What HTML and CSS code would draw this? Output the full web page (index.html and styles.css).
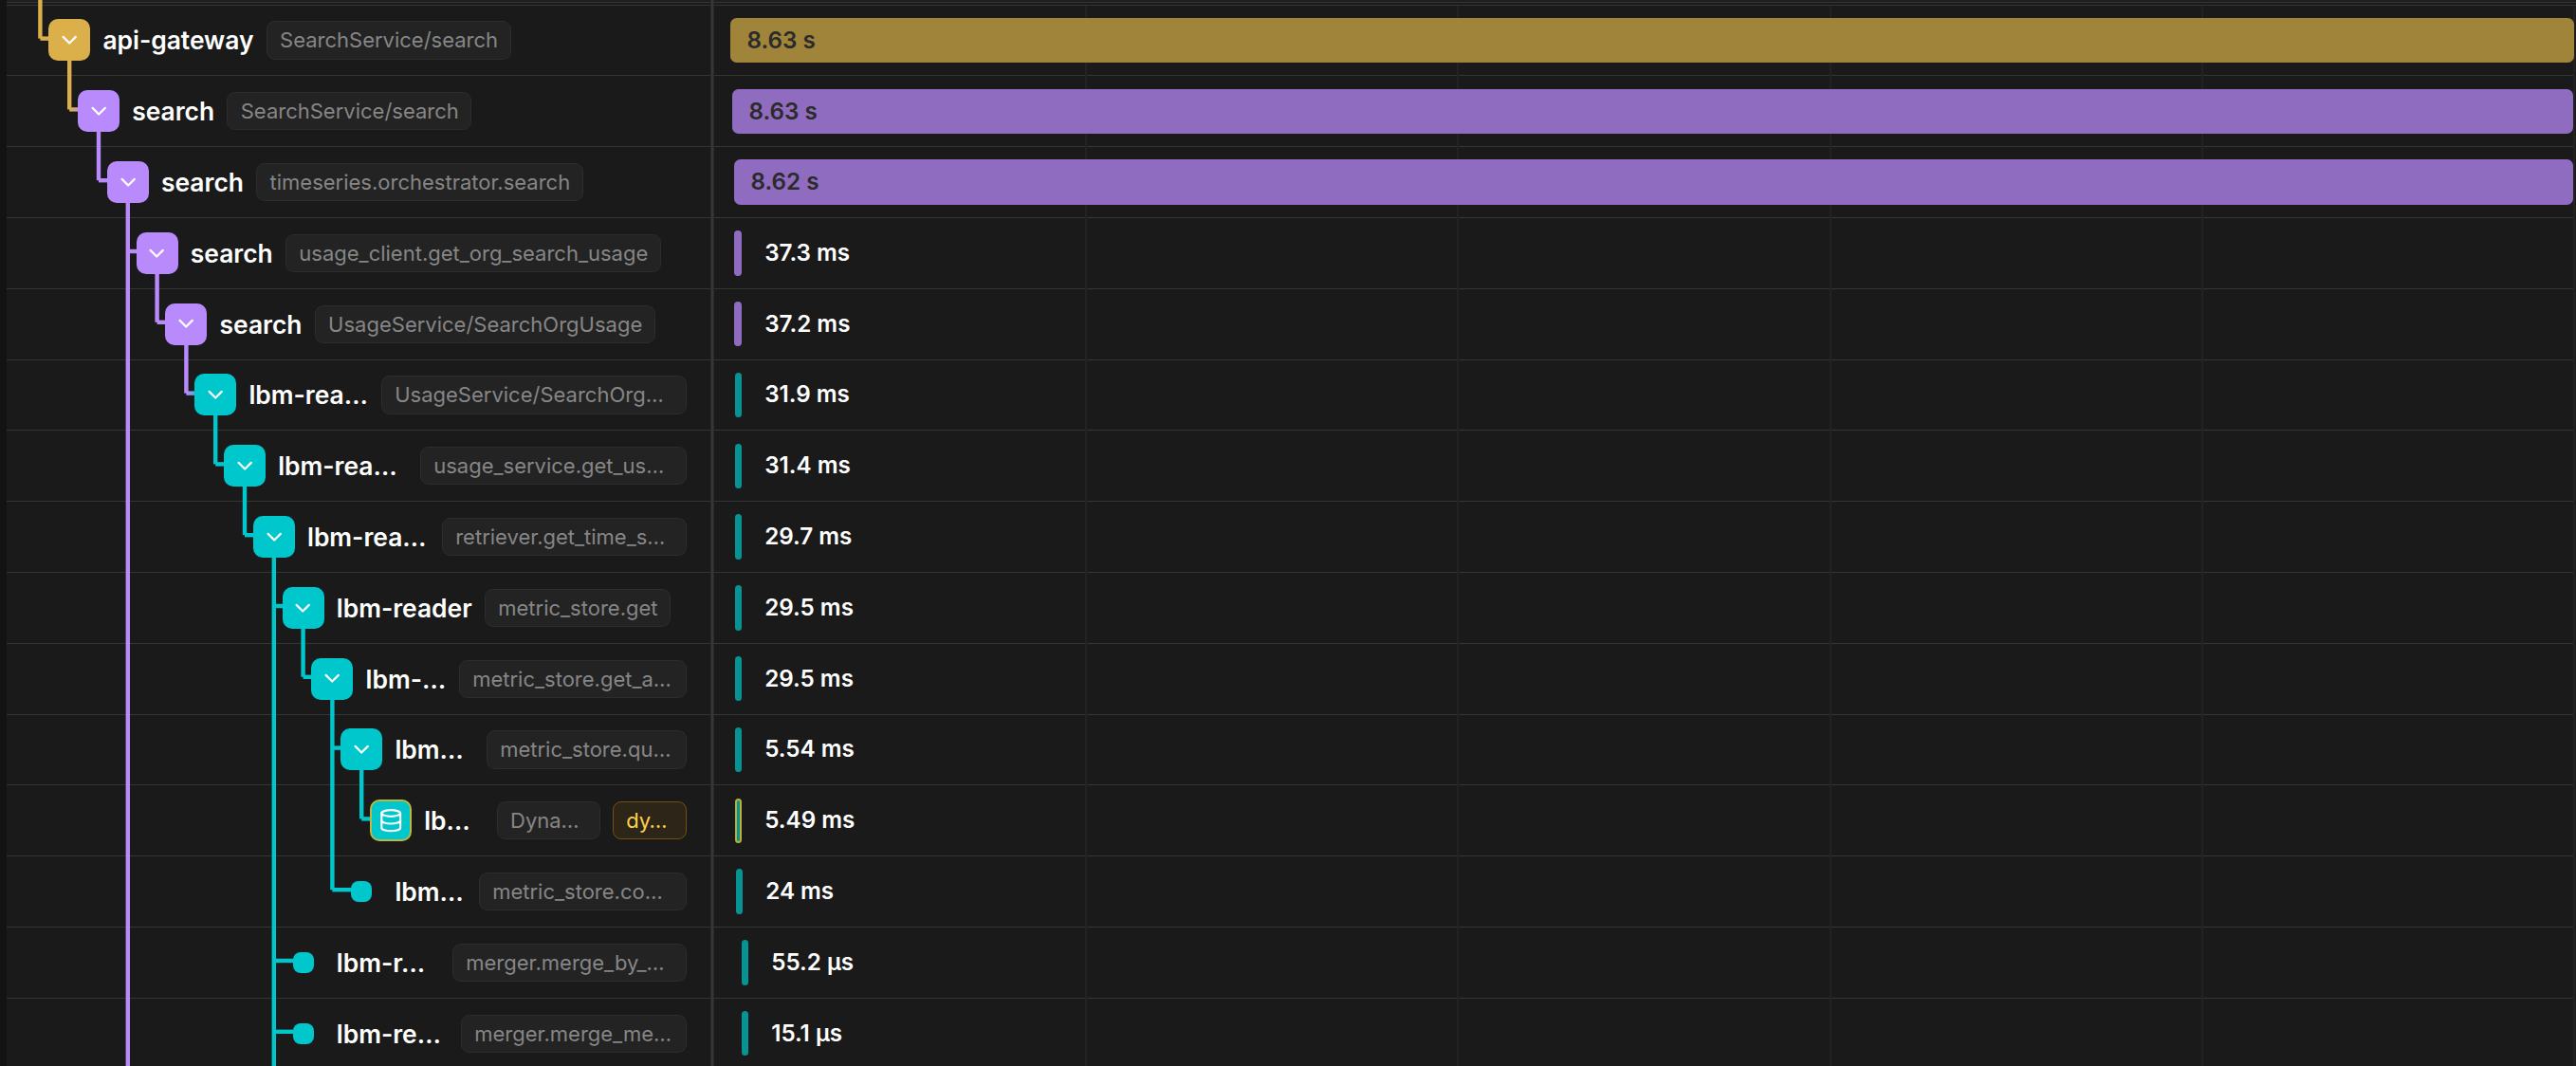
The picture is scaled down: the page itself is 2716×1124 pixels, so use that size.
FILE: index.html
```html
<!DOCTYPE html>
<html lang="en">
<head>
<meta charset="utf-8">
<title>Trace waterfall</title>
<link rel="stylesheet" href="styles.css">
</head>
<body>
<svg width="0" height="0" class="defs">
  <symbol id="chev" viewBox="0 0 24 24"><path d="m6 9 6 6 6-6"/></symbol>
  <symbol id="db" viewBox="0 0 24 24"><ellipse cx="12" cy="5" rx="9" ry="3"/><path d="M3 5v14a9 3 0 0 0 18 0V5"/><path d="M3 12a9 3 0 0 0 18 0"/></symbol>
</svg>
<main class="trace">
  <div class="header-edge"></div>
  <div class="rows" id="rows"></div>
  <svg class="links" id="links" width="750" height="1124"></svg>
  <div class="ticks"><i></i><i></i><i></i><i></i><i></i></div>
  <div class="divider"></div>
</main>
<script src="trace.js"></script>
</body>
</html>
```
FILE: styles.css
```css
* { box-sizing: border-box; }
body { margin: 0; background: #131313; font-family: Inter, "Liberation Sans", sans-serif; color: #fff; }
.defs { position: absolute; }
.trace { position: relative; margin-left: 7px; width: 2709px; height: 1124px; overflow: hidden; background: #1a1a1a; }
.header-edge { height: 5.6px; background: linear-gradient(#1e1e1e 2px, #353535 2px 3px, #1a1a1a 3px 5px, #353535 5px); }
.row { display: grid; grid-template-columns: 742px 1fr; height: 74.8px; border-bottom: 1px solid #353535; margin-right: 2px; }
.row:last-child { border-bottom-color: transparent; }
.span { display: flex; align-items: center; gap: 13.2px; min-width: 0; padding-right: 25.2px; padding-left: calc(44.2px + var(--depth) * 30.8px); }
.node { position: relative; z-index: 2; display: grid; place-items: center; flex: none; width: 44px; height: 44px; border-radius: 10px; background: var(--color); }
.node svg { width: 26.4px; height: 26.4px; fill: none; stroke: #fff; stroke-width: 2; stroke-linecap: round; stroke-linejoin: round; }
.node.store { border: 2px solid #bdb840; }
.node.leaf { width: 22px; height: 22px; margin: 0 11px; border-radius: 8px; }
.name { font-size: 26.4px; font-weight: 600; line-height: 40px; white-space: nowrap; }
.chip { height: 40.3px; flex: none; padding: 0 12.6px 0 13.4px; border: 1px solid #2d2d2d; border-radius: 8.8px; background: #232323; color: #868686; font-size: 22px; line-height: 38px; white-space: nowrap; }
.chip.fill { margin-left: auto; }
.chip.system { border-color: #76500f; background: #2e2519; color: #fbd04c; }
.timeline { display: flex; align-items: center; padding-left: var(--start); }
.bar { position: relative; z-index: 2; flex: none; height: 47.4px; border-radius: 6.6px; background: var(--fill); color: #2b2b2b; }
.bar.short { border-radius: 4px; }
.bar.store { border: 2px solid #bdae35; }
.time { font-size: 24.2px; font-weight: 600; line-height: 46px; white-space: nowrap; }
.bar .time { display: block; padding-left: 17.6px; line-height: 47px; }
.bar + .time { margin-left: 24.2px; }
.gold { --color: #dbb04a; --fill: #a08439; }
.violet { --color: #b98afb; --fill: #8f6cbf; }
.teal { --color: #00c7cb; --fill: #079394; }
.links { position: absolute; left: 0; top: 0; z-index: 1; fill: none; stroke-width: 4.4; }
.ticks { position: absolute; inset: 6px 0 0 746.8px; display: flex; }
.ticks i { flex: none; width: 392.3px; border-right: 2px solid #222; }
.divider { position: absolute; left: 742px; top: 0; z-index: 3; width: 4px; height: 100%; background: #363636; border: 1px solid #2a2a2a; border-width: 0 1px; }
```
FILE: trace.js
```js
const spans = [
  // depth, service, color, [operation, chip width], duration, bar start, bar width
  [0, "api-gateway", "gold", [["SearchService/search"]], "8.63 s", 770, 1944],
  [1, "search", "violet", [["SearchService/search"]], "8.63 s", 772, 1941],
  [2, "search", "violet", [["timeseries.orchestrator.search"]], "8.62 s", 774, 1939],
  [3, "search", "violet", [["usage_client.get_org_search_usage"]], "37.3 ms", 774, 8],
  [4, "search", "violet", [["UsageService/SearchOrgUsage"]], "37.2 ms", 774, 8],
  [5, "lbm-rea…", "teal", [["UsageService/SearchOrg…", 322]], "31.9 ms", 775, 7],
  [6, "lbm-rea…", "teal", [["usage_service.get_us…", 281]], "31.4 ms", 775, 7],
  [7, "lbm-rea…", "teal", [["retriever.get_time_s…", 258]], "29.7 ms", 775, 7],
  [8, "lbm-reader", "teal", [["metric_store.get"]], "29.5 ms", 775, 7],
  [9, "lbm-…", "teal", [["metric_store.get_a…", 240]], "29.5 ms", 775, 7],
  [10, "lbm…", "teal", [["metric_store.qu…", 211]], "5.54 ms", 775, 7],
  [11, "lb…", "teal", [["Dyna…", 109], ["dy…", 78]], "5.49 ms", 775, 7, "store"],
  [10, "lbm…", "teal", [["metric_store.co…", 219]], "24 ms", 776, 7, "leaf"],
  [8, "lbm-r…", "teal", [["merger.merge_by_…", 247]], "55.2 µs", 782, 7, "leaf"],
  [8, "lbm-re…", "teal", [["merger.merge_me…", 238]], "15.1 µs", 782, 7, "leaf"]
];

document.getElementById("rows").innerHTML = spans.map(([depth, name, color, chips, time, start, width, kind = ""]) => {
  const icon = kind === "leaf" ? "" : `<svg><use href="#${kind ? "db" : "chev"}"/></svg>`;
  const chipHtml = chips.map(([text, w], i) =>
    `<span class="chip ${w && !i ? "fill" : ""} ${i ? "system" : ""}"${w ? ` style="width:${w}px"` : ""}>${text}</span>`).join("");
  const label = `<span class="time">${time}</span>`;
  const long = width > 100;
  return `<div class="row ${color}">
    <div class="span" style="--depth:${depth}"><span class="node ${kind}">${icon}</span><span class="name">${name}</span>${chipHtml}</div>
    <div class="timeline" style="--start:${start - 749}px"><div class="bar ${long ? "" : "short"} ${kind}" style="width:${width}px">${long ? label : ""}</div>${long ? "" : label}</div>
  </div>`;
}).join("");

const hex = { gold: "#dbb04a", violet: "#b98afb", teal: "#00c7cb" };
const centerX = d => 66.2 + d * 30.8;
const linkY = i => 40.6 + i * 74.8;
const line = (x1, y1, x2, y2, c) => `<path d="M${x1} ${y1}L${x2} ${y2}" stroke="${c}"/>`;
let links = line(35.4, 0, 35.4, linkY(0), hex.gold) + line(35.4, linkY(0), 46, linkY(0), hex.gold);
spans.forEach(([depth, , color], i) => {
  let last = -1;
  for (let j = i + 1; j < spans.length && spans[j][0] > depth; j++) {
    if (spans[j][0] !== depth + 1) continue;
    last = j;
    const child = spans[j][2];
    const end = centerX(depth + 1) - (spans[j][7] === "leaf" ? 9 : 20);
    const y = linkY(j), x = centerX(depth);
    let stroke = hex[child];
    if (child !== color) {
      links += `<linearGradient id="g${j}" gradientUnits="userSpaceOnUse" x1="${x}" x2="${x + 15}"><stop stop-color="${hex[color]}"/><stop offset="1" stop-color="${hex[child]}"/></linearGradient>`;
      stroke = `url(#g${j})`;
    }
    links += `<path d="M${x} ${y}L${end} ${y}" stroke="${stroke}"/>`;
  }
  if (last < 0) return;
  const open = depth === 2 || depth === 7;
  links += line(centerX(depth), linkY(i) + 20, centerX(depth), open ? 1124 : linkY(last), hex[color]);
});
document.getElementById("links").innerHTML = links;
```
